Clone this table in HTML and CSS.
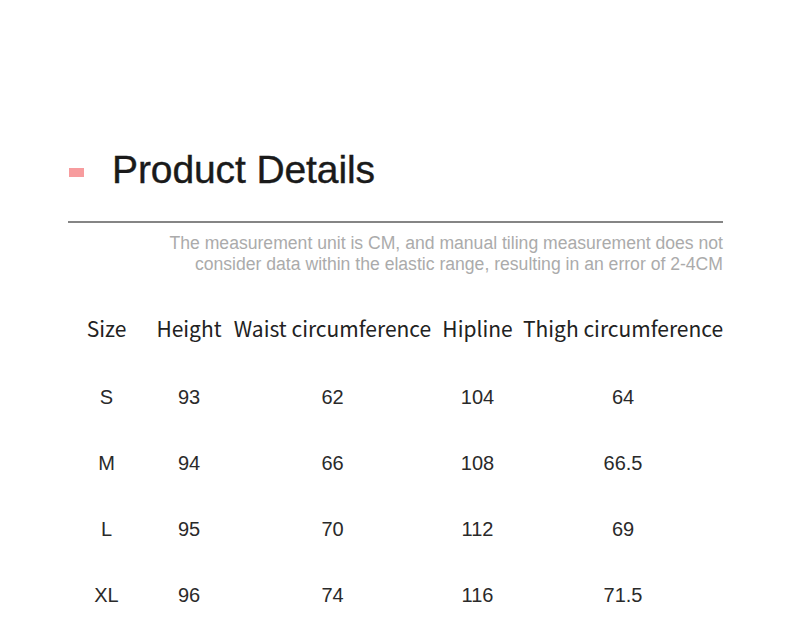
FILE: index.html
```html
<!DOCTYPE html>
<html lang="en">
<head>
<meta charset="utf-8">
<title>Product Details</title>
<link rel="stylesheet" href="styles.css">
</head>
<body>
<main class="page">
  <header class="title-row">
    <span class="marker"></span>
    <h1 class="title">Product Details</h1>
  </header>
  <hr class="rule">
  <p class="note">The measurement unit is CM, and manual tiling measurement does not<br>consider data within the elastic range, resulting in an error of 2-4CM</p>
  <div class="table">
    <div class="row head">
      <span>Size</span><span>Height</span><span>Waist circumference</span><span>Hipline</span><span>Thigh circumference</span>
    </div>
    <div class="row">
      <span>S</span><span>93</span><span>62</span><span>104</span><span>64</span>
    </div>
    <div class="row">
      <span>M</span><span>94</span><span>66</span><span>108</span><span>66.5</span>
    </div>
    <div class="row">
      <span>L</span><span>95</span><span>70</span><span>112</span><span>69</span>
    </div>
    <div class="row">
      <span>XL</span><span>96</span><span>74</span><span>116</span><span>71.5</span>
    </div>
  </div>
</main>
</body>
</html>
```
FILE: styles.css
```css
html, body {
  margin: 0;
  padding: 0;
  background: #ffffff;
}
body {
  font-family: "Liberation Sans", Arial, sans-serif;
  color: #222;
}
.page {
  width: 655px;
  padding: 146px 0 0 68px;
}
.title-row {
  display: flex;
  align-items: center;
  height: 48px;
}
.marker {
  width: 15px;
  height: 9px;
  background: #f79c9e;
  margin-left: 1px;
  margin-top: 5px;
}
.title {
  margin: 0 0 0 28px;
  font-size: 39px;
  font-weight: normal;
  letter-spacing: -0.1px;
  color: #1a1a1a;
  line-height: 48px;
  -webkit-text-stroke: 0.4px #1a1a1a;
}
.rule {
  margin: 27px 0 0 0;
  border: 0;
  height: 2px;
  background: #858585;
}
.note {
  margin: 10px 0 0 0;
  text-align: right;
  font-family: "Liberation Sans", Arial, sans-serif;
  font-size: 17.6px;
  line-height: 21px;
  color: #ababab;
  letter-spacing: 0;
}
.table {
  margin-top: 31px;
}
.row {
  display: grid;
  grid-template-columns: 77px 88px 199px 91px 200px;
  height: 66px;
  align-items: center;
  text-align: center;
  font-size: 20px;
  color: #2a2a2a;
}
.row.head {
  height: 44px;
  margin-bottom: 14px;
  font-family: "Noto Sans CJK SC", "Noto Sans", sans-serif;
  font-size: 21px;
  letter-spacing: 0;
  color: #222;
}
.row span {
  white-space: nowrap;
}
```
